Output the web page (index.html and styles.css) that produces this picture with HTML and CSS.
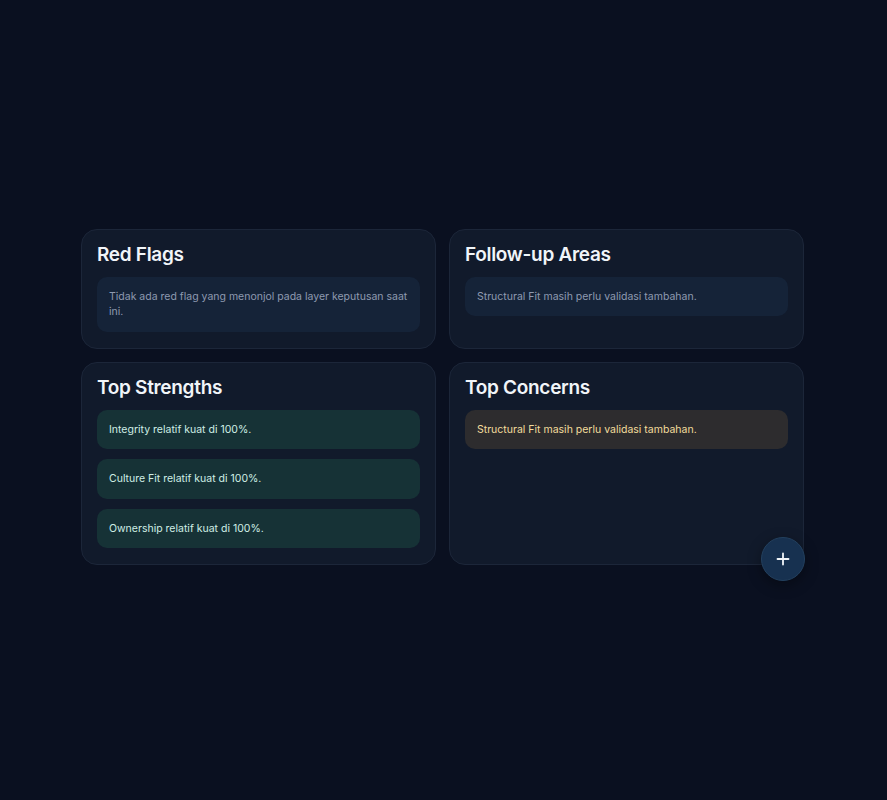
FILE: index.html
```html
<!DOCTYPE html>
<html lang="en">
<head>
  <meta charset="UTF-8">
  <title>Decision Summary</title>
  <meta name="viewport" content="width=device-width, initial-scale=1">
  <link rel="stylesheet" href="styles.css">
</head>
<body>
  <main class="summary">
    <section class="card">
      <h2>Red Flags</h2>
      <ul class="items">
        <li class="item">Tidak ada red flag yang menonjol pada layer keputusan saat ini.</li>
      </ul>
    </section>

    <section class="card">
      <h2>Follow-up Areas</h2>
      <ul class="items">
        <li class="item">Structural Fit masih perlu validasi tambahan.</li>
      </ul>
    </section>

    <section class="card">
      <h2>Top Strengths</h2>
      <ul class="items">
        <li class="item good">Integrity relatif kuat di 100%.</li>
        <li class="item good">Culture Fit relatif kuat di 100%.</li>
        <li class="item good">Ownership relatif kuat di 100%.</li>
      </ul>
    </section>

    <section class="card">
      <h2>Top Concerns</h2>
      <ul class="items">
        <li class="item warn">Structural Fit masih perlu validasi tambahan.</li>
      </ul>
    </section>

    <button class="fab" aria-label="Add">
      <svg width="14" height="14" viewBox="0 0 14 14">
        <path d="M7 1.5v11M1.5 7h11" stroke="#f1f5f9" stroke-width="1.8" stroke-linecap="round"/>
      </svg>
    </button>
  </main>
</body>
</html>
```

FILE: styles.css
```css
html, body {
  height: 100%;
}
body {
  margin: 0;
  background-color: #0a1020;
  font-family: Inter, "Noto Sans", sans-serif;
  color: #f1f5f9;
  display: flex;
  align-items: center;
  justify-content: center;
}
.summary {
  position: relative;
  width: 723px;
  display: grid;
  grid-template-columns: 1fr 1fr;
  gap: 13px;
  margin-top: -6px;
  margin-left: -2px;
}
.card {
  background-color: #111a2b;
  border: 1px solid #1c2639;
  border-radius: 16px;
  padding: 14px 15px 16px;
}
.card h2 {
  margin: 0 0 12px;
  font-size: 19px;
  line-height: 21px;
  font-weight: 600;
  letter-spacing: -0.3px;
}
.items {
  list-style: none;
  margin: 0;
  padding: 0;
  display: flex;
  flex-direction: column;
  gap: 10px;
}
.item {
  background-color: #152338;
  color: #8e9ab0;
  border-radius: 10px;
  padding: 12px 12px;
  font-size: 10.5px;
  line-height: 15.5px;
}
.item.good {
  background-color: #163236;
  color: #cfeee5;
}
.item.warn {
  background-color: #2d2c2e;
  color: #f2dc9c;
}
.fab {
  position: absolute;
  right: -1px;
  bottom: -16px;
  width: 44px;
  height: 44px;
  border-radius: 50%;
  border: 1px solid #23405e;
  background-color: #173150;
  box-shadow: 0 4px 14px rgba(0, 0, 0, 0.35);
  display: flex;
  align-items: center;
  justify-content: center;
  cursor: pointer;
  padding: 0;
}
```
